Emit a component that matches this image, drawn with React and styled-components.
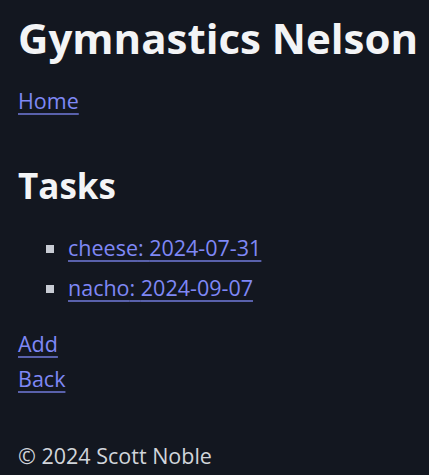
import React from "react";
import styled, { createGlobalStyle } from "styled-components";

const GlobalStyle = createGlobalStyle`
  html, body {
    margin: 0;
    padding: 0;
    background: #131720;
  }
  body {
    font-family: "Open Sans", "Noto Sans", sans-serif;
    font-size: 21.5px;
    line-height: 35px;
    color: #e5e7eb;
  }
`;

const Page = styled.div`
  min-height: 475px;
  box-sizing: border-box;
  padding: 13px 18px 0;
  display: flex;
  flex-direction: column;
`;

const Title = styled.h1`
  margin: 0;
  font-size: 42px;
  line-height: 50px;
  font-weight: 700;
  color: #f3f4f6;
  white-space: nowrap;
`;

const Nav = styled.nav`
  margin-top: 20px;
`;

const Link = styled.a`
  color: #7f88f6;
  text-decoration: underline;
  text-decoration-color: rgba(127, 136, 246, 0.65);
  text-decoration-thickness: 2px;
  text-underline-offset: 4px;
  cursor: pointer;
`;

const SectionTitle = styled.h2`
  margin: 45px 0 0;
  font-size: 35px;
  line-height: 45px;
  font-weight: 700;
  color: #f3f4f6;
`;

const TaskList = styled.ul`
  margin: 22px 0 0;
  padding-left: 50px;
  list-style: square;
`;

const TaskItem = styled.li`
  margin-bottom: 5px;
  &::marker {
    color: #c8ccd4;
  }
`;

const Actions = styled.div`
  margin-top: 16px;
  display: flex;
  flex-direction: column;
  align-items: flex-start;
`;

const Footer = styled.footer`
  margin-top: 42px;
  color: #d1d5db;
`;

const tasks = [
  { name: "cheese", date: "2024-07-31" },
  { name: "nacho", date: "2024-09-07" },
];

export default function App() {
  return (
    <>
      <GlobalStyle />
      <Page>
        <Title>Gymnastics Nelson</Title>
        <Nav>
          <Link href="#">Home</Link>
        </Nav>
        <SectionTitle>Tasks</SectionTitle>
        <TaskList>
          {tasks.map((t) => (
            <TaskItem key={t.name}>
              <Link href="#">
                {t.name}: {t.date}
              </Link>
            </TaskItem>
          ))}
        </TaskList>
        <Actions>
          <Link href="#">Add</Link>
          <Link href="#">Back</Link>
        </Actions>
        <Footer>© 2024 Scott Noble</Footer>
      </Page>
    </>
  );
}
